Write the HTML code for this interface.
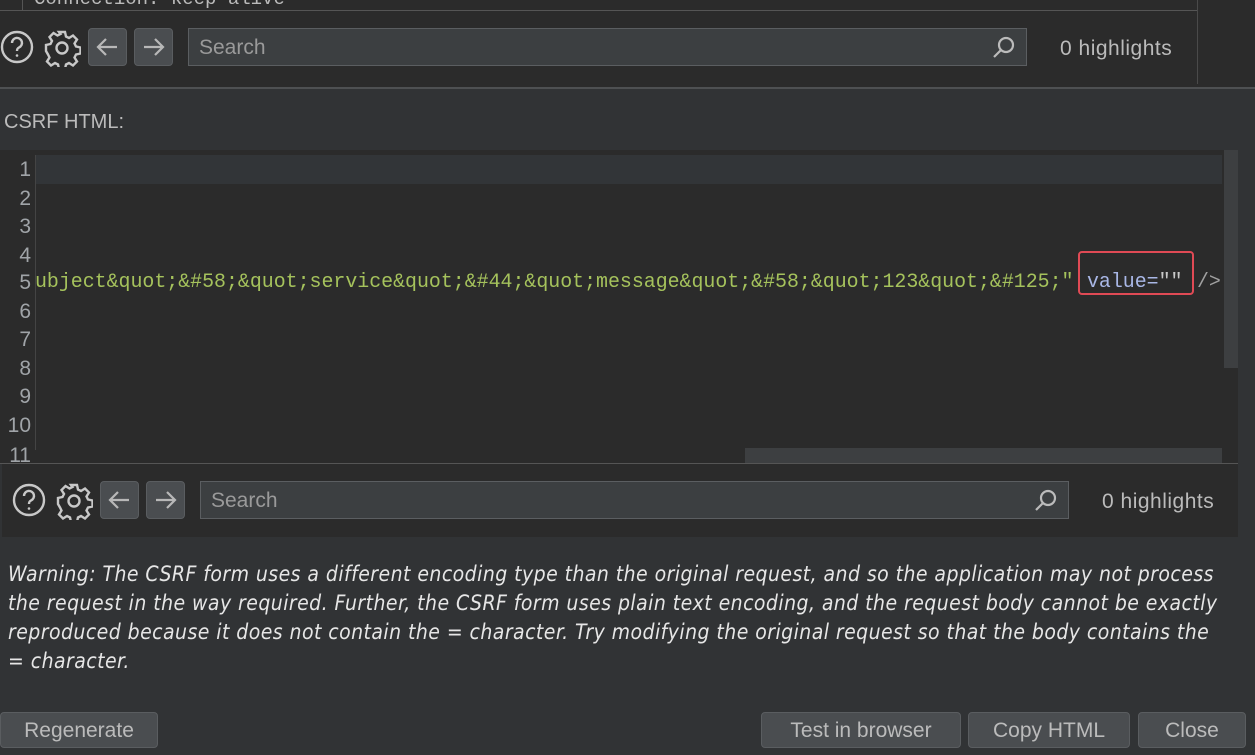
<!DOCTYPE html>
<html><head><meta charset="utf-8"><style>
*{margin:0;padding:0;box-sizing:border-box}
body{width:1255px;height:755px;overflow:hidden;background:#313335;font-family:"Liberation Sans","DejaVu Sans",sans-serif;color:#bbbbbb;position:relative}
.a{position:absolute}
.btn{position:absolute;background:#4a4d50;border:1px solid #5a5d60;border-radius:4px}
.sb{position:absolute;background:#3c3f41;border:1px solid #5b5e61;color:#9a9a9a;font-size:21px;padding-left:10px;line-height:38px}
.hl{position:absolute;font-size:21px;color:#bbbbbb}
.mono{font-family:"Liberation Mono",monospace;font-size:19.9px}
.ln{position:absolute;right:0;width:35px;text-align:right;padding-right:4px;color:#a0a4a8;font-size:21px}
.b2{position:absolute;top:712px;height:36px;background:#4a4d50;border:1px solid #5a5d60;border-radius:4px;color:#bbbbbb;font-size:21px;text-align:center;line-height:36px}
</style></head><body>
<div class="a" style="left:0;top:0;width:1255px;height:87px;background:#2b2b2b"></div>
<div class="a" style="left:0;top:10px;width:1197px;height:1px;background:#555"></div>
<div class="a" style="left:22px;top:0;width:1px;height:10px;background:#555"></div>
<div class="a mono" style="left:34px;top:-12px;color:#bbb;font-size:19px">Connection: keep-alive</div>
<div class="a" style="left:1197px;top:0;width:1px;height:84px;background:#4a4a4a"></div>
<div class="a" style="left:0;top:87px;width:1255px;height:2px;background:#4e5052"></div>

<svg class="a" style="left:0;top:30px" width="36" height="36" viewBox="0 0 36 36" fill="none" stroke="#c8c8c8" stroke-width="2.4"><circle cx="17" cy="17" r="15"/><path d="M12 13a5 5 0 1 1 7 4.5c-1.5.8-2 1.5-2 3.5"/><circle cx="17" cy="25.5" r="1.3" fill="#c8c8c8" stroke="none"/></svg>
<svg class="a" style="left:43px;top:29px" width="38" height="38" viewBox="0 0 38 38" fill="none" stroke="#c8c8c8" stroke-width="2.4"><path d="M16 3h6l1 4.5 3 1.5 4-2.5 4 4-2.5 4 1.5 3 4.5 1v6l-4.5 1-1.5 3 2.5 4-4 4-4-2.5-3 1.5-1 4.5h-6l-1-4.5-3-1.5-4 2.5-4-4 2.5-4-1.5-3L3 22v-6l4.5-1 1.5-3-2.5-4 4-4 4 2.5 3-1.5z"/><circle cx="19" cy="19" r="5.5"/></svg>
<div class="btn" style="left:88px;top:28px;width:39px;height:38px"></div>
<svg class="a" style="left:88px;top:28px" width="39" height="38" viewBox="0 0 39 38" fill="none" stroke="#b8b8b8" stroke-width="2.2"><path d="M29 19H10M18 11l-8 8 8 8"/></svg>
<div class="btn" style="left:134px;top:28px;width:39px;height:38px"></div>
<svg class="a" style="left:134px;top:28px" width="39" height="38" viewBox="0 0 39 38" fill="none" stroke="#b8b8b8" stroke-width="2.2"><path d="M10 19h19M21 11l8 8-8 8"/></svg>
<div class="sb" style="left:188px;top:28px;width:839px;height:38px">Search</div>
<svg class="a" style="left:990px;top:33px" width="28" height="28" viewBox="0 0 28 28" fill="none" stroke="#bbb" stroke-width="2.2"><circle cx="16" cy="12" r="7"/><path d="M11 17l-7 7"/></svg>
<div class="hl" style="left:1060px;top:37px;letter-spacing:0.5px">0 highlights</div>

<div class="a" style="left:4px;top:111px;font-size:20px;color:#bbb">CSRF HTML:</div>

<div class="a" style="left:0;top:150px;width:1238px;height:313px;background:#2b2b2b;overflow:hidden">
  <div class="a" style="left:36px;top:5px;width:1186px;height:29px;background:#323538"></div>
  <div class="a" style="left:35px;top:5px;width:1px;height:295px;background:#444"></div>
  <div class="a" style="left:0;top:0;width:35px;height:313px">
    <div class="ln" style="top:8px">1</div><div class="ln" style="top:37px">2</div><div class="ln" style="top:65px">3</div><div class="ln" style="top:94px">4</div><div class="ln" style="top:121px">5</div><div class="ln" style="top:150px">6</div><div class="ln" style="top:178px">7</div><div class="ln" style="top:207px">8</div><div class="ln" style="top:235px">9</div><div class="ln" style="top:264px">10</div><div class="ln" style="top:294px">11</div>
  </div>
  <div class="a mono" style="left:35px;top:120px;white-space:pre;color:#a5c25c">ubject&amp;quot;&amp;#58;&amp;quot;service&amp;quot;&amp;#44;&amp;quot;message&amp;quot;&amp;#58;&amp;quot;123&amp;quot;&amp;#125;"</div>
  <div class="a mono" style="left:1087px;top:120px;white-space:pre;color:#a9b7e6">value=<span style="color:#c8c8c8">""</span></div>
  <div class="a" style="left:1078px;top:101px;width:116px;height:44px;border:2px solid #e04a55;border-radius:4px"></div>
  <div class="a mono" style="left:1197px;top:120px;color:#a0a0a0">/&gt;</div>
  <div class="a" style="left:1224px;top:0;width:14px;height:218px;background:#3d3f41"></div>
  <div class="a" style="left:745px;top:298px;width:477px;height:15px;background:#3d3f41"></div>
</div>
<div class="a" style="left:0;top:463px;width:1238px;height:1px;background:#555"></div>

<div class="a" style="left:2px;top:464px;width:1236px;height:73px;background:#2b2b2b"></div>
<svg class="a" style="left:12px;top:483px" width="36" height="36" viewBox="0 0 36 36" fill="none" stroke="#c8c8c8" stroke-width="2.4"><circle cx="17" cy="17" r="15"/><path d="M12 13a5 5 0 1 1 7 4.5c-1.5.8-2 1.5-2 3.5"/><circle cx="17" cy="25.5" r="1.3" fill="#c8c8c8" stroke="none"/></svg>
<svg class="a" style="left:55px;top:482px" width="38" height="38" viewBox="0 0 38 38" fill="none" stroke="#c8c8c8" stroke-width="2.4"><path d="M16 3h6l1 4.5 3 1.5 4-2.5 4 4-2.5 4 1.5 3 4.5 1v6l-4.5 1-1.5 3 2.5 4-4 4-4-2.5-3 1.5-1 4.5h-6l-1-4.5-3-1.5-4 2.5-4-4 2.5-4-1.5-3L3 22v-6l4.5-1 1.5-3-2.5-4 4-4 4 2.5 3-1.5z"/><circle cx="19" cy="19" r="5.5"/></svg>
<div class="btn" style="left:100px;top:481px;width:39px;height:38px"></div>
<svg class="a" style="left:100px;top:481px" width="39" height="38" viewBox="0 0 39 38" fill="none" stroke="#b8b8b8" stroke-width="2.2"><path d="M29 19H10M18 11l-8 8 8 8"/></svg>
<div class="btn" style="left:146px;top:481px;width:39px;height:38px"></div>
<svg class="a" style="left:146px;top:481px" width="39" height="38" viewBox="0 0 39 38" fill="none" stroke="#b8b8b8" stroke-width="2.2"><path d="M10 19h19M21 11l8 8-8 8"/></svg>
<div class="sb" style="left:200px;top:481px;width:869px;height:38px">Search</div>
<svg class="a" style="left:1032px;top:486px" width="28" height="28" viewBox="0 0 28 28" fill="none" stroke="#bbb" stroke-width="2.2"><circle cx="16" cy="12" r="7"/><path d="M11 17l-7 7"/></svg>
<div class="hl" style="left:1102px;top:490px;letter-spacing:0.5px">0 highlights</div>

<div class="a" style="left:8px;top:560px;white-space:nowrap;font-style:italic;font-size:21px;line-height:29px;color:#e6e6e6;font-family:'DejaVu Sans Condensed','Liberation Sans',sans-serif;letter-spacing:0.45px">Warning: The CSRF form uses a different encoding type than the original request, and so the application may not process<br>the request in the way required. Further, the CSRF form uses plain text encoding, and the request body cannot be exactly<br>reproduced because it does not contain the = character. Try modifying the original request so that the body contains the<br>= character.</div>

<div class="b2" style="left:0;width:158px">Regenerate</div>
<div class="b2" style="left:761px;width:200px">Test in browser</div>
<div class="b2" style="left:968px;width:162px">Copy HTML</div>
<div class="b2" style="left:1138px;width:108px">Close</div>
</body></html>
